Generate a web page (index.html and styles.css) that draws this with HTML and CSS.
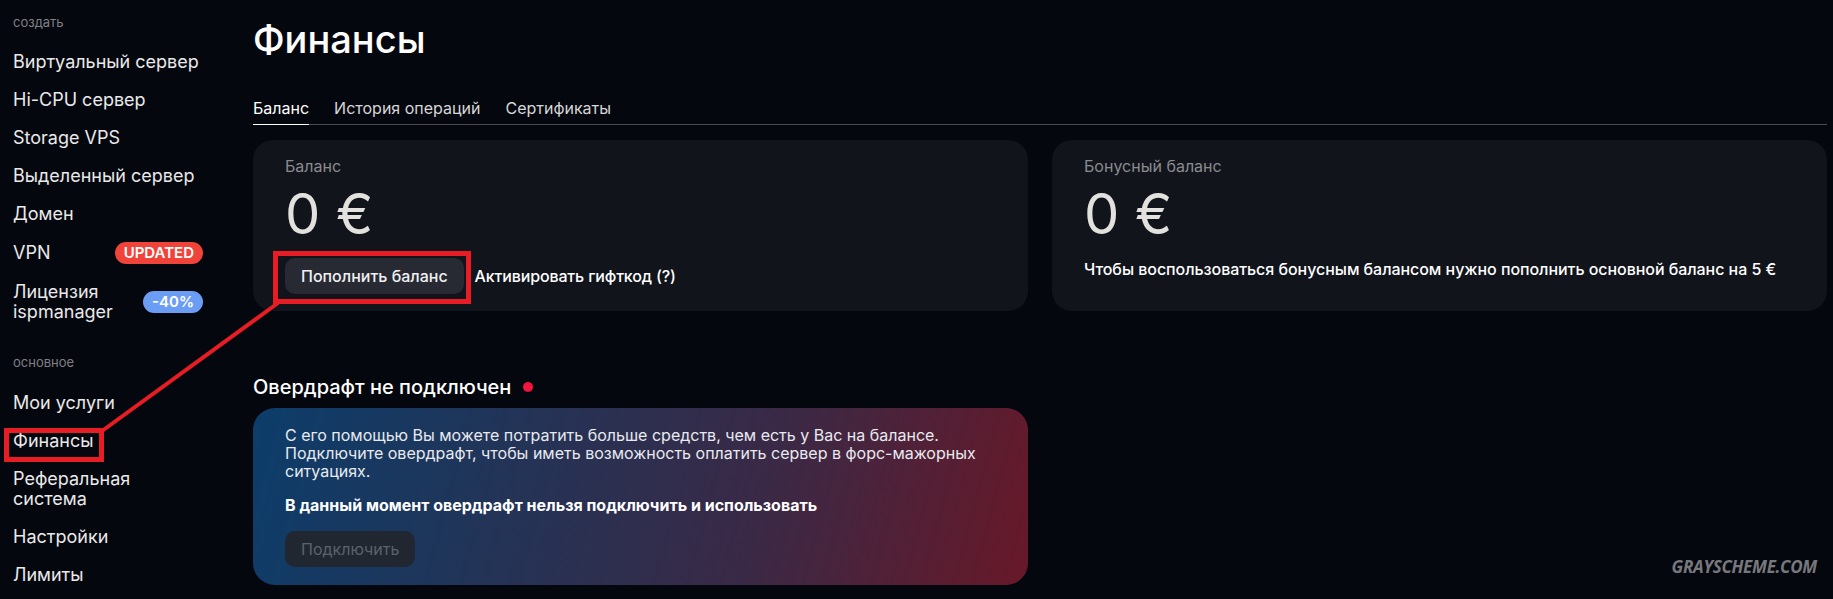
FILE: index.html
```html
<!DOCTYPE html>
<html lang="ru">
<head>
    <meta charset="UTF-8">
    <meta name="viewport" content="width=device-width, initial-scale=1.0">
    <title>Финансы</title>
    <link rel="stylesheet" href="styles.css">
</head>
<body>
    <div class="page">
        <aside class="sidebar">
            <div class="nav-label">создать</div>
            <a class="nav-item" href="#">Виртуальный сервер</a>
            <a class="nav-item" href="#">Hi-CPU сервер</a>
            <a class="nav-item" href="#">Storage VPS</a>
            <a class="nav-item" href="#">Выделенный сервер</a>
            <a class="nav-item" href="#">Домен</a>
            <a class="nav-item" href="#">VPN <span class="badge badge-red">UPDATED</span></a>
            <a class="nav-item" href="#"><span>Лицензия<br>ispmanager</span> <span class="badge badge-blue">-40%</span></a>

            <div class="nav-label">основное</div>
            <a class="nav-item" href="#">Мои услуги</a>
            <a class="nav-item active" href="#">Финансы</a>
            <a class="nav-item" href="#">Реферальная<br>система</a>
            <a class="nav-item" href="#">Настройки</a>
            <a class="nav-item" href="#">Лимиты</a>
        </aside>

        <main class="content">
            <h1>Финансы</h1>

            <nav class="tabs">
                <a class="tab active" href="#">Баланс</a>
                <a class="tab" href="#">История операций</a>
                <a class="tab" href="#">Сертификаты</a>
            </nav>

            <div class="cards">
                <div class="card">
                    <div class="card-label">Баланс</div>
                    <div class="amount">0 €</div>
                    <div class="card-actions">
                        <button class="btn">Пополнить баланс</button>
                        <a class="link" href="#">Активировать гифткод (?)</a>
                    </div>
                </div>
                <div class="card">
                    <div class="card-label">Бонусный баланс</div>
                    <div class="amount">0 €</div>
                    <div class="note">Чтобы воспользоваться бонусным балансом нужно пополнить основной баланс на 5 €</div>
                </div>
            </div>

            <h2 class="overdraft-title">Овердрафт не подключен <span class="dot"></span></h2>
            <div class="overdraft">
                <p>С его помощью Вы можете потратить больше средств, чем есть у Вас на балансе.<br>
                Подключите овердрафт, чтобы иметь возможность оплатить сервер в форс-мажорных ситуациях.</p>
                <p class="strong">В данный момент овердрафт нельзя подключить и использовать</p>
                <button class="btn btn-disabled" disabled>Подключить</button>
            </div>
        </main>
    </div>

    <!-- red marks drawn over the screenshot -->
    <svg class="annotations" width="1833" height="599" viewBox="0 0 1833 599">
        <rect x="6.5" y="430.5" width="95" height="29" fill="none" stroke="#e81c24" stroke-width="5"/>
        <rect x="275.5" y="253.5" width="193" height="48" fill="none" stroke="#e81c24" stroke-width="5"/>
        <line x1="278" y1="303" x2="102" y2="431" stroke="#e81c24" stroke-width="4"/>
    </svg>

    <div class="watermark">GRAYSCHEME.COM</div>
</body>
</html>
```

FILE: styles.css
```css
body {
    margin: 0;
    background: #05070e;
    color: #fff;
    font-family: Inter, "Noto Sans", sans-serif;
    overflow: hidden;
}
a {
    color: inherit;
    text-decoration: none;
}
.page {
    display: flex;
    height: 599px;
}

/* sidebar */
.sidebar {
    width: 216px;
    flex-shrink: 0;
    box-sizing: border-box;
    padding: 14px 13px 0;
    display: flex;
    flex-direction: column;
}
.nav-label {
    font-size: 13px;
    line-height: 16px;
    color: #7f8085;
    margin: 23px 0 14px;
}
.nav-label:first-child {
    margin-top: 0;
    margin-bottom: 13px;
}
.nav-item {
    display: flex;
    align-items: center;
    justify-content: space-between;
    font-size: 18px;
    line-height: 20px;
    padding: 9px 0;
    color: #e9e9ea;
}
.badge {
    font-size: 15px;
    font-weight: 600;
    line-height: 22px;
    padding: 0 9px;
    border-radius: 11px;
    color: #fff;
}
.badge-red {
    background: #f0443a;
}
.badge-blue {
    background: #6b9df5;
}

/* main */
.content {
    flex: 1;
    padding: 0 6px 0 37px;
}
h1 {
    margin: 16px 0 0;
    font-size: 38px;
    font-weight: 500;
    line-height: 46px;
}
.tabs {
    display: flex;
    gap: 25px;
    margin-top: 36px;
    border-bottom: 1px solid #4a4b50;
}
.tab {
    font-size: 16px;
    padding-bottom: 6px;
    margin-bottom: -1px;
    border-bottom: 1px solid transparent;
    color: #d6d6d8;
}
.tab.active {
    color: #fff;
    border-bottom-color: #fff;
}

.cards {
    display: grid;
    grid-template-columns: 1fr 1fr;
    gap: 24px;
    margin-top: 15px;
}
.card {
    background: #11141b;
    border-radius: 20px;
    padding: 16px 32px 17px;
}
.card-label {
    font-size: 16px;
    color: #8a8b90;
}
.amount {
    font-size: 56px;
    line-height: 66px;
    color: #e2e1de;
    margin-top: 5px;
}
.card-actions {
    display: flex;
    align-items: center;
    gap: 11px;
    margin-top: 11px;
}
.btn {
    height: 36px;
    padding: 0 16px;
    border: none;
    border-radius: 10px;
    background: #272a33;
    color: #f0f0f2;
    font-family: inherit;
    font-size: 16px;
    font-weight: 500;
}
.link {
    font-size: 16px;
    font-weight: 500;
    letter-spacing: -0.15px;
}
.note {
    margin-top: 12px;
    font-size: 16px;
    font-weight: 500;
    letter-spacing: -0.05px;
}

.overdraft-title {
    display: flex;
    align-items: center;
    gap: 12px;
    margin: 64px 0 9px;
    font-size: 20px;
    font-weight: 500;
}
.dot {
    width: 10px;
    height: 10px;
    border-radius: 50%;
    background: #f5133f;
}
.overdraft {
    width: calc(50% - 12px);
    box-sizing: border-box;
    padding: 18px 32px;
    border-radius: 22px;
    background: linear-gradient(105deg, #0c3d6a 0%, #243356 35%, #3a2946 65%, #681828 100%);
}
.overdraft p {
    margin: 0 0 16px;
    font-size: 16px;
    line-height: 18px;
    color: #e8eaef;
}
.overdraft p.strong {
    font-weight: 700;
    color: #fff;
    margin-bottom: 17px;
}
.btn-disabled {
    background: rgba(34, 38, 45, 0.92);
    color: #5c626b;
    font-weight: 400;
}

.annotations {
    position: absolute;
    top: 0;
    left: 0;
    pointer-events: none;
}
.watermark {
    position: absolute;
    top: 558px;
    right: 16px;
    font-family: "Open Sans", sans-serif;
    font-size: 17px;
    font-weight: 700;
    font-style: italic;
    line-height: 1;
    letter-spacing: -0.3px;
    color: #77787d;
}
```
